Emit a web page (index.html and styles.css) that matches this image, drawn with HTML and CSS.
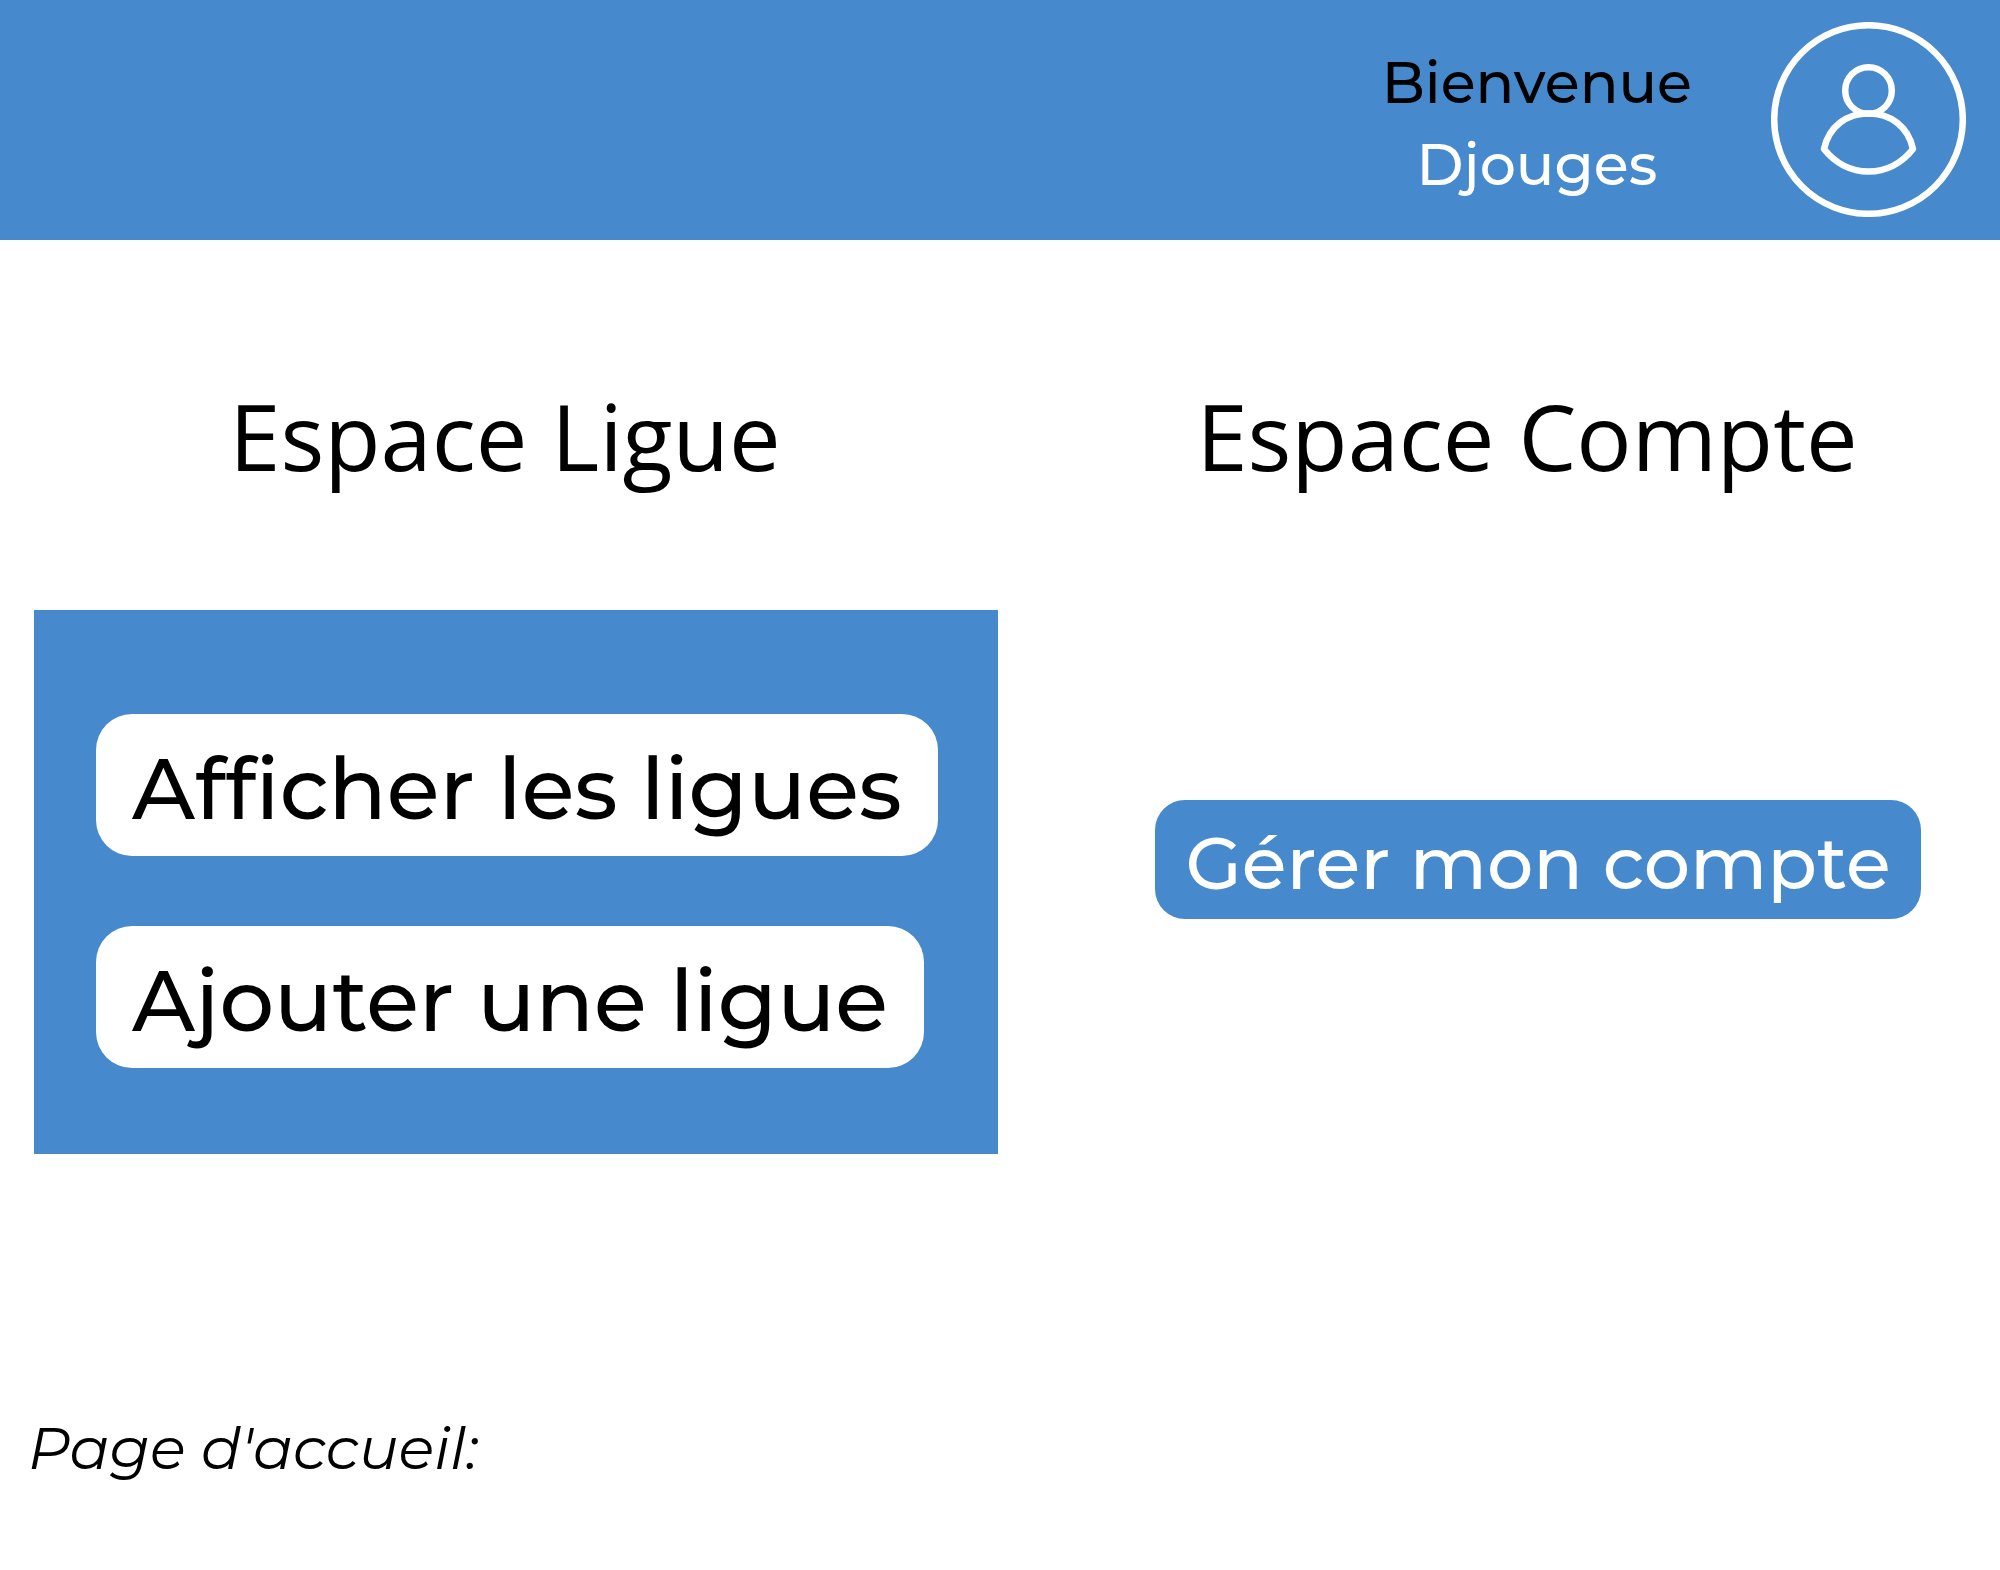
FILE: index.html
```html
<!DOCTYPE html>
<html lang="fr">
<head>
<meta charset="utf-8">
<meta name="viewport" content="width=device-width, initial-scale=1">
<title>Page d'accueil</title>
<link rel="stylesheet" href="styles.css">
</head>
<body>
<header class="topbar">
  <p class="welcome">Bienvenue<span class="welcome-name">Djouges</span></p>
  <svg class="avatar" viewBox="0 0 195 195" role="img" aria-label="Profil">
    <circle cx="97.5" cy="97.5" r="94.3"/>
    <circle cx="97.5" cy="68.5" r="23.3"/>
    <path d="M53 127C58 104 76 91.500 97.500 91.500S137 104 142 127C131 141 115 149.500 97.500 149.500S64 141 53 127Z"/>
  </svg>
</header>
<main class="spaces">
  <section class="space">
    <h1 class="space-title">Espace Ligue</h1>
    <div class="panel">
      <button class="button" type="button">Afficher les ligues</button>
      <button class="button" type="button">Ajouter une ligue</button>
    </div>
  </section>
  <section class="space">
    <h1 class="space-title">Espace Compte</h1>
    <div class="account">
      <button class="button button-account" type="button">Gérer mon compte</button>
    </div>
  </section>
</main>
<footer class="footer">Page d'accueil:</footer>
</body>
</html>
```
FILE: styles.css
```css
* {
  box-sizing: border-box;
}

body {
  margin: 0;
  background: #fff;
  color: #000;
  font-family: Montserrat, Inter, sans-serif;
}

.topbar {
  display: flex;
  justify-content: flex-end;
  align-items: center;
  gap: 79px;
  min-height: 240px;
  padding: 22px 34px 23px;
  background: #468acd;
}

.welcome {
  margin: 0;
  padding-top: 8px;
  font-size: 57px;
  font-weight: 500;
  line-height: 82px;
  text-align: center;
}

.welcome-name {
  display: block;
  color: #fff;
}

.avatar {
  width: 195px;
  height: 195px;
  fill: none;
  stroke: #fff;
  stroke-width: 6.5;
  stroke-linejoin: round;
}

.spaces {
  display: grid;
  grid-template-columns: minmax(0, 964fr) minmax(0, 924fr);
  column-gap: 78px;
  padding: 136px 0 0 34px;
}

.space {
  display: flex;
  flex-direction: column;
}

.space-title {
  margin: 0;
  padding-right: 22px;
  font-family: "Open Sans", sans-serif;
  font-size: 92px;
  font-weight: 400;
  line-height: 120px;
  text-align: center;
}

.panel {
  display: flex;
  flex-direction: column;
  align-items: flex-start;
  gap: 70px;
  margin-top: 114px;
  padding: 104px 62px 86px;
  background: #468acd;
}

.button {
  padding: 15px 36px 7px;
  border: 0;
  border-radius: 36px;
  background: #fff;
  color: #000;
  font-family: inherit;
  font-size: 86px;
  font-weight: 500;
  line-height: 120px;
  white-space: nowrap;
}

.account {
  display: flex;
  justify-content: center;
  margin-top: 304px;
}

.button-account {
  padding: 13px 30px 6px;
  border-radius: 30px;
  background: #468acd;
  color: #fff;
  font-size: 73px;
  line-height: 100px;
}

.footer {
  padding: 254px 28px 80px;
  font-size: 59px;
  font-style: italic;
  font-weight: 400;
  line-height: 80px;
}
```
